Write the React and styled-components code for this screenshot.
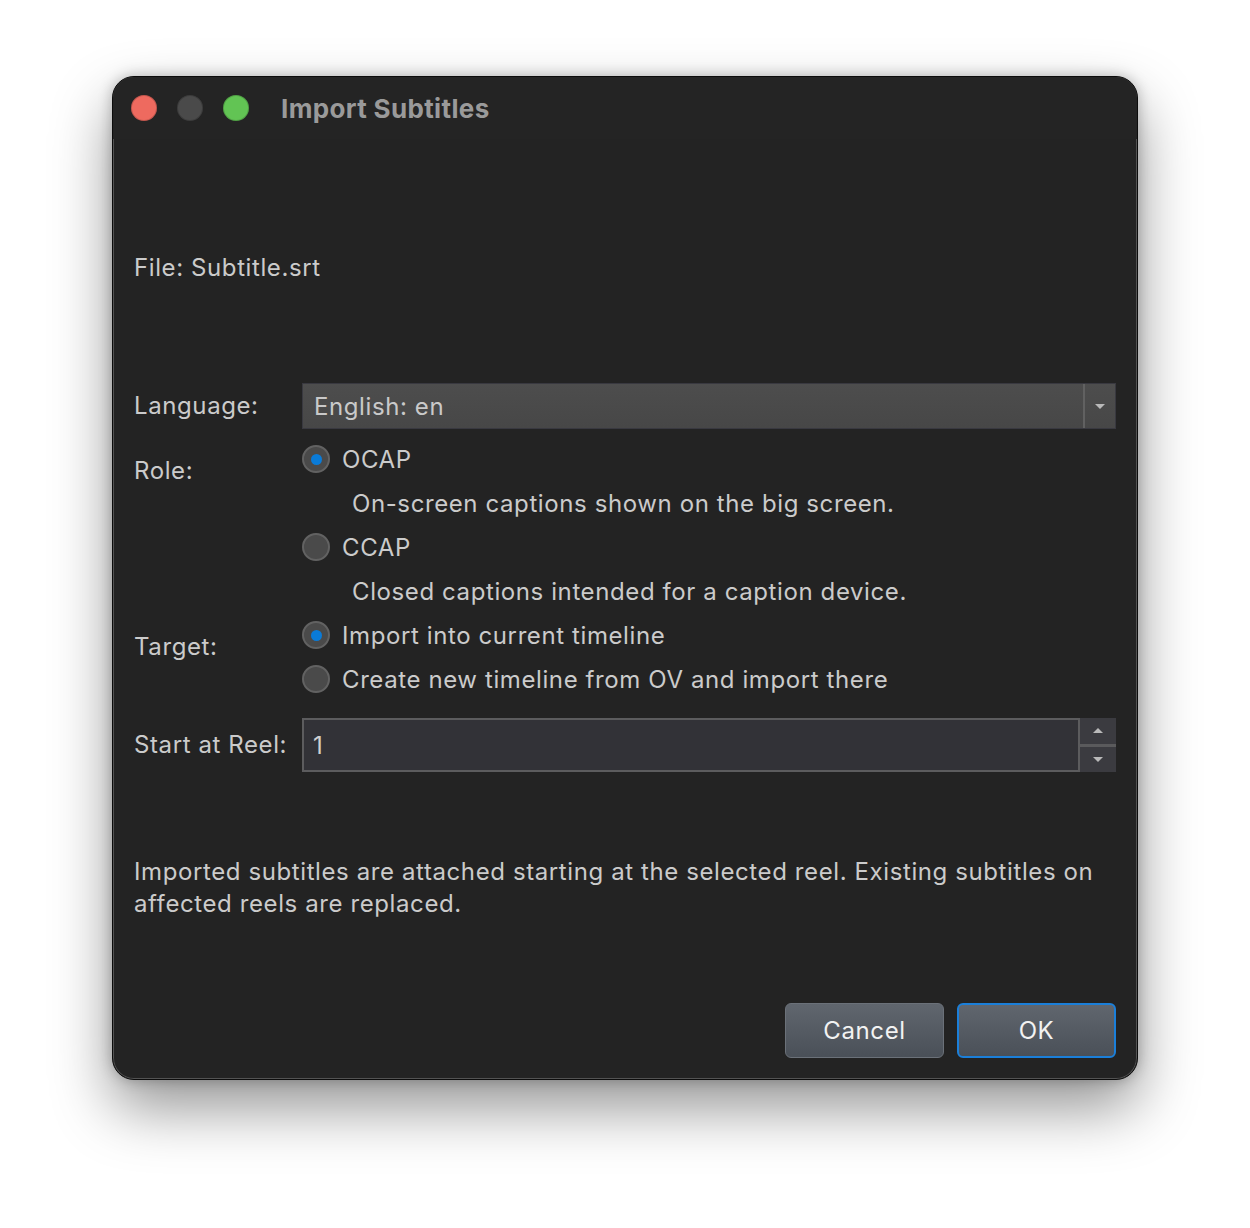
import React from "react";
import styled, { createGlobalStyle } from "styled-components";

const GlobalStyle = createGlobalStyle`
  html, body {
    margin: 0;
    padding: 0;
    background: #ffffff;
  }
  body {
    font-family: Inter, "Noto Sans", "Liberation Sans", sans-serif;
  }
`;

const Page = styled.div`
  padding: 76px 112px 0 112px;
  height: 1228px;
  box-sizing: border-box;
`;

const Window = styled.div`
  width: 1026px;
  height: 1004px;
  box-sizing: border-box;
  display: flex;
  flex-direction: column;
  background: #232323;
  border: 1px solid #0c0c0c;
  border-radius: 22px;
  box-shadow: inset 0 0 0 1px rgba(255, 255, 255, 0.22),
    0 28px 60px rgba(0, 0, 0, 0.42), 0 0 14px rgba(0, 0, 0, 0.25);
  overflow: hidden;
`;

const TitleBar = styled.div`
  height: 62px;
  flex-shrink: 0;
  display: flex;
  align-items: center;
  padding-left: 18px;
  background: #242424;
`;

const Lights = styled.div`
  display: flex;
  gap: 20px;
  margin-right: 32px;
`;

const Light = styled.span`
  width: 26px;
  height: 26px;
  border-radius: 50%;
  background: ${(props) => props.color};
  box-shadow: inset 0 0 0 1px rgba(0, 0, 0, 0.18);
`;

const Title = styled.h1`
  margin: 0;
  font-size: 26px;
  font-weight: 700;
  color: #9a9a9a;
  letter-spacing: 0.35px;
`;

const Content = styled.div`
  flex: 1;
  display: flex;
  flex-direction: column;
  padding: 0 21px 21px 21px;
  color: #cbcbcb;
  font-size: 24px;
  letter-spacing: 0.6px;
`;

const FileLine = styled.div`
  margin-top: 113px;
  line-height: 32px;
`;

const FormRow = styled.div`
  display: grid;
  grid-template-columns: 168px 1fr;
  align-items: ${(props) => props.align || "center"};
  margin-top: ${(props) => props.gap || 0}px;
`;

const Label = styled.label`
  line-height: 32px;
  padding-top: ${(props) => props.offset || 0}px;
`;

const Combo = styled.div`
  height: 46px;
  box-sizing: border-box;
  display: flex;
  align-items: stretch;
  background: linear-gradient(#4d4d4d, #474747);
  border: 1px solid #393940;
`;

const ComboValue = styled.div`
  flex: 1;
  display: flex;
  align-items: center;
  padding-left: 11px;
  color: #c9c9c9;
  border-right: 2px solid #616161;
`;

const DropButton = styled.div`
  width: 30px;
  display: flex;
  align-items: center;
  justify-content: center;
`;

const StepButton = styled.div`
  flex: 1;
  display: flex;
  align-items: center;
  justify-content: center;
  border-bottom: ${(props) => (props.split ? "3px solid #5a5a5c" : "none")};
`;

const Triangle = styled.span`
  width: 0;
  height: 0;
  border-left: 5px solid transparent;
  border-right: 5px solid transparent;
  ${(props) =>
    props.up
      ? "border-bottom: 5px solid #b9b9b9;"
      : "border-top: 5px solid #b9b9b9;"}
`;

const OptionList = styled.div`
  display: flex;
  flex-direction: column;
`;

const Option = styled.div`
  height: 44px;
  display: flex;
  align-items: center;
  gap: 12px;
`;

const Hint = styled.div`
  height: 44px;
  display: flex;
  align-items: center;
  padding-left: 50px;
`;

const Radio = styled.span`
  width: 28px;
  height: 28px;
  box-sizing: border-box;
  border-radius: 50%;
  background: #4a4a4a;
  border: 2px solid #626262;
  display: flex;
  align-items: center;
  justify-content: center;
  flex-shrink: 0;
  &::after {
    content: "";
    width: 11px;
    height: 11px;
    border-radius: 50%;
    background: #0a7bd8;
    display: ${(props) => (props.checked ? "block" : "none")};
  }
`;

const Spin = styled.div`
  height: 54px;
  display: flex;
`;

const SpinField = styled.div`
  flex: 1;
  box-sizing: border-box;
  background: #323237;
  border: 2px solid #5c5c5e;
  display: flex;
  align-items: center;
  padding-left: 9px;
  color: #d0d0d0;
`;

const SpinButtons = styled.div`
  width: 36px;
  display: flex;
  flex-direction: column;
  background: #3b3b40;
`;

const Note = styled.p`
  margin: 84px 0 0 0;
  line-height: 32px;
`;

const Footer = styled.div`
  margin-top: auto;
  display: flex;
  justify-content: flex-end;
  gap: 13px;
`;

const Button = styled.button`
  width: 159px;
  height: 55px;
  box-sizing: border-box;
  border-radius: 6px;
  font-family: inherit;
  font-size: 24px;
  letter-spacing: 0.6px;
  color: #f2f2f2;
  background: linear-gradient(#60666e, #4a5058);
  border: ${(props) =>
    props.primary ? "2px solid #1b7fd9" : "1px solid #6b7179"};
`;

const App = () => {
  return (
    <Page>
      <GlobalStyle />
      <Window>
        <TitleBar>
          <Lights>
            <Light color="#ee6a5f" />
            <Light color="#4a4a4a" />
            <Light color="#62c454" />
          </Lights>
          <Title>Import Subtitles</Title>
        </TitleBar>
        <Content>
          <FileLine>File: Subtitle.srt</FileLine>

          <FormRow gap={99}>
            <Label>Language:</Label>
            <Combo>
              <ComboValue>English: en</ComboValue>
              <DropButton>
                <Triangle />
              </DropButton>
            </Combo>
          </FormRow>

          <FormRow gap={8} align="start">
            <Label offset={18}>Role:</Label>
            <OptionList>
              <Option>
                <Radio checked />
                OCAP
              </Option>
              <Hint>On-screen captions shown on the big screen.</Hint>
              <Option>
                <Radio />
                CCAP
              </Option>
              <Hint>Closed captions intended for a caption device.</Hint>
            </OptionList>
          </FormRow>

          <FormRow align="start">
            <Label offset={18}>Target:</Label>
            <OptionList>
              <Option>
                <Radio checked />
                Import into current timeline
              </Option>
              <Option>
                <Radio />
                Create new timeline from OV and import there
              </Option>
            </OptionList>
          </FormRow>

          <FormRow gap={17}>
            <Label>Start at Reel:</Label>
            <Spin>
              <SpinField>1</SpinField>
              <SpinButtons>
                <StepButton split>
                  <Triangle up />
                </StepButton>
                <StepButton>
                  <Triangle />
                </StepButton>
              </SpinButtons>
            </Spin>
          </FormRow>

          <Note>
            Imported subtitles are attached starting at the selected reel.
            Existing subtitles on affected reels are replaced.
          </Note>

          <Footer>
            <Button>Cancel</Button>
            <Button primary>OK</Button>
          </Footer>
        </Content>
      </Window>
    </Page>
  );
};

export default App;
